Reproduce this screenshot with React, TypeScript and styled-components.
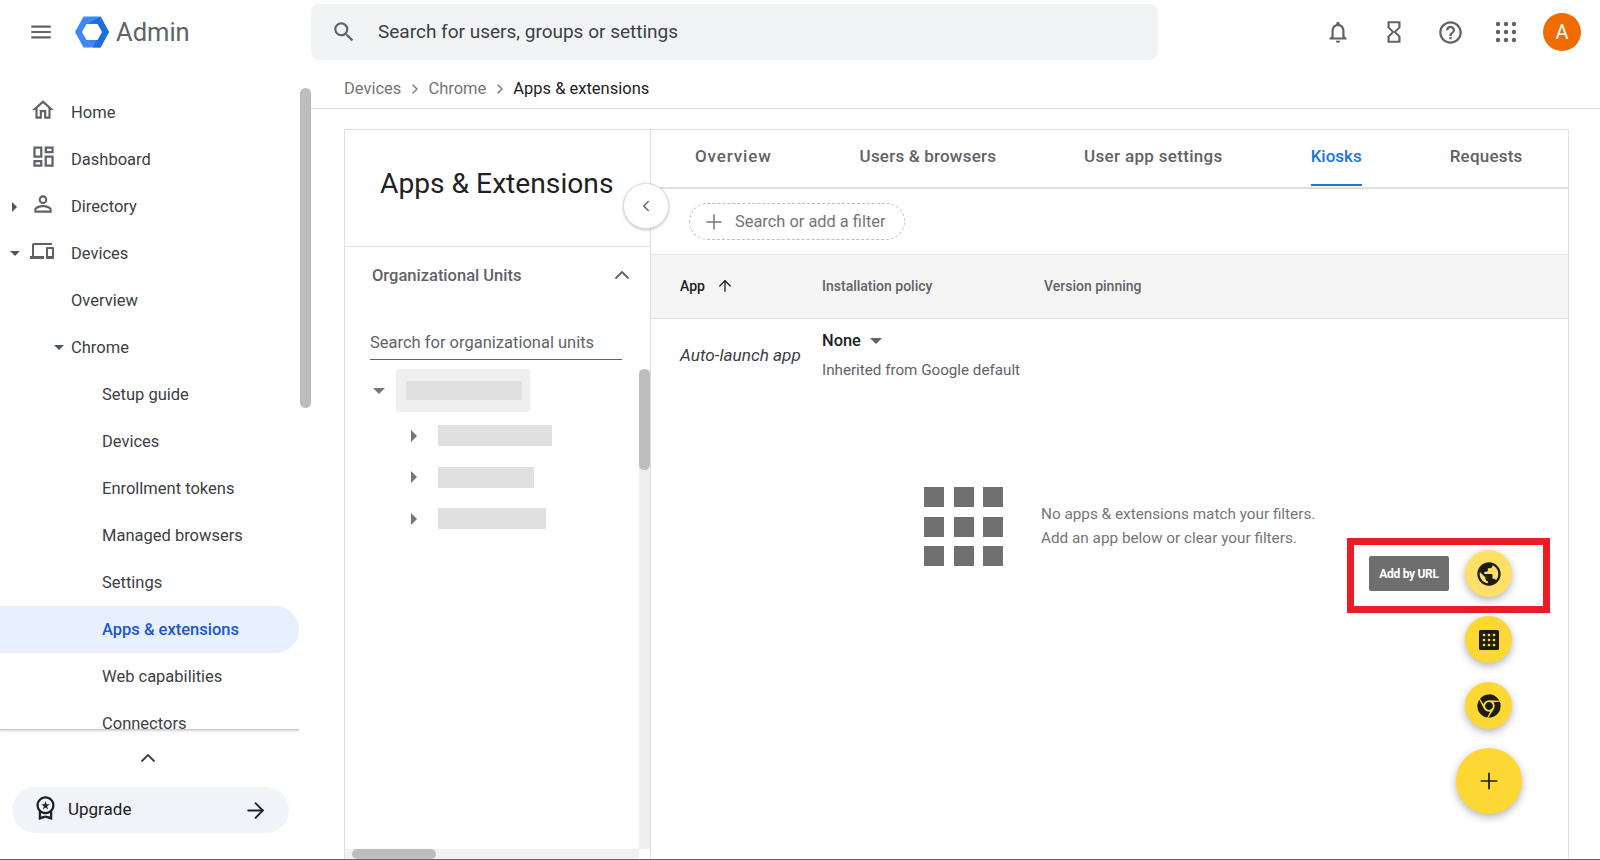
import React from "react";
import styled, { createGlobalStyle } from "styled-components";
import { ArrowRight, ArrowUp, ChevronLeft, ChevronUp, ChevronRight, Plus } from "lucide-react";
import { FaChrome } from "react-icons/fa";

const GlobalStyle = createGlobalStyle`
	html, body {
		margin: 0;
		padding: 0;
		background: #fff;
		overflow: hidden;
	}
	body {
		font-family: Roboto, "Liberation Sans", sans-serif;
		color: #3c4043;
	}
	* {
		box-sizing: border-box;
	}
`;

const Page = styled.div`
	position: relative;
	width: 1600px;
	height: 860px;
	display: flex;
	flex-direction: column;
	border-bottom: 1px solid #666;
	overflow: hidden;
`;

const TopBar = styled.header`
	display: flex;
	align-items: center;
	height: 64px;
	flex: none;
`;

const Brand = styled.div`
	width: 311px;
	display: flex;
	align-items: center;
	padding-left: 28px;
`;

const LogoMark = styled.svg`
	margin-left: 20px;
	flex: none;
`;

const BrandName = styled.span`
	font-size: 25.5px;
	color: #5f6368;
	margin-left: 6px;
`;

const SearchBox = styled.div`
	width: 847px;
	height: 56px;
	background: #f1f3f4;
	border-radius: 8px;
	display: flex;
	align-items: center;
	padding: 0 0 1px 20px;
	gap: 21px;
	font-size: 19px;
	color: #3c4043;
`;

const TopActions = styled.div`
	flex: 1;
	display: flex;
	align-items: center;
	justify-content: flex-end;
	padding-right: 19px;
	gap: 30px;
`;

const Avatar = styled.div`
	width: 38px;
	height: 38px;
	border-radius: 50%;
	background: #ef6c00;
	color: #fff;
	font-size: 20px;
	display: flex;
	align-items: center;
	justify-content: center;
	margin-left: -5px;
`;

const Glyph = styled.svg<{ $size?: number; $color?: string }>`
	width: ${(p) => p.$size ?? 24}px;
	height: ${(p) => p.$size ?? 24}px;
	fill: ${(p) => p.$color ?? "#5f6368"};
	flex: none;
	display: block;
`;

const Body = styled.div`
	flex: 1;
	display: flex;
	min-height: 0;
`;

const Sidebar = styled.aside`
	width: 311px;
	flex: none;
	display: flex;
	flex-direction: column;
`;

const NavArea = styled.div`
	height: 665px;
	display: flex;
	flex: none;
`;

const NavList = styled.nav`
	width: 299px;
	flex: none;
	padding-top: 25px;
	overflow: hidden;
	height: 665px;
`;

const NavScrollThumb = styled.div`
	width: 11px;
	height: 320px;
	margin: 24px 0 0 1px;
	border-radius: 6px;
	background: #bdbdbd;
`;

const NavDivider = styled.div`
	width: 299px;
	height: 1px;
	flex: none;
	background: #c8c8c8;
	box-shadow: 0 1px 2px rgba(0, 0, 0, 0.25);
`;

const NavRow = styled.div<{ $indent: number; $active?: boolean }>`
	height: 47px;
	display: flex;
	align-items: center;
	padding-left: ${(p) => p.$indent}px;
	font-size: 16.5px;
	color: ${(p) => (p.$active ? "#1a56d6" : "#3c4043")};
	background: ${(p) => (p.$active ? "#e8f0fe" : "transparent")};
	border-radius: 0 24px 24px 0;
	font-weight: ${(p) => (p.$active ? 500 : 400)};
`;

const CaretSlot = styled.span`
	width: 25px;
	flex: none;
	display: flex;
	justify-content: center;
`;

const IconSlot = styled.span`
	width: 44px;
	flex: none;
	display: flex;
	padding-left: 3px;
	margin-top: -6px;
`;

const Caret = styled.span<{ $dir: "right" | "down"; $color?: string; $size?: number }>`
	display: block;
	width: 0;
	height: 0;
	${(p) => {
		const s = p.$size ?? 5;
		const c = p.$color ?? "#455a64";
		return p.$dir === "right"
			? `border-top: ${s}px solid transparent; border-bottom: ${s}px solid transparent; border-left: ${s}px solid ${c};`
			: `border-left: ${s}px solid transparent; border-right: ${s}px solid transparent; border-top: ${s}px solid ${c};`;
	}}
`;

const SideFooter = styled.div`
	flex: 1;
	display: flex;
	flex-direction: column;
	padding-top: 16px;
`;

const CollapseRow = styled.div`
	width: 296px;
	display: flex;
	justify-content: center;
	color: #3c4043;
`;

const UpgradePill = styled.div`
	width: 277px;
	height: 46px;
	margin: 17px 0 0 12px;
	background: #f1f4f9;
	border-radius: 23px;
	display: flex;
	align-items: center;
	padding: 0 21px 0 20px;
	font-size: 17px;
	color: #202124;
`;

const UpgradeBadge = styled(Glyph)`
	margin-top: -5px;
`;

const UpgradeLabel = styled.span`
	flex: 1;
	margin: -2px 0 0 9px;
`;

const Main = styled.main`
	flex: 1;
	min-width: 0;
	display: flex;
	flex-direction: column;
`;

const Crumbs = styled.div`
	height: 45px;
	flex: none;
	border-bottom: 1px solid #e0e0e0;
	display: flex;
	align-items: center;
	padding: 5px 0 0 33px;
	font-size: 16.5px;
	color: #757575;
`;

const CrumbCurrent = styled.span`
	color: #202124;
`;

const CrumbSep = styled.span`
	margin: 0 5px 0 6px;
	display: flex;
	color: #757575;
`;

const Content = styled.div`
	flex: 1;
	min-height: 0;
	padding: 20px 31px 0 33px;
	display: flex;
`;

const Frame = styled.div`
	position: relative;
	flex: 1;
	display: flex;
	border: 1px solid #e0e0e0;
	border-bottom: none;
`;

const LeftPanel = styled.section`
	position: relative;
	width: 306px;
	flex: none;
	border-right: 1px solid #e0e0e0;
	display: flex;
	flex-direction: column;
`;

const TitleBlock = styled.div`
	height: 117px;
	flex: none;
	border-bottom: 1px solid #e0e0e0;
	padding: 36px 0 0 35px;
	font-size: 28.2px;
	line-height: 36px;
	color: #202124;
`;

const ToggleButton = styled.div`
	position: absolute;
	left: 278px;
	top: 53px;
	width: 46px;
	height: 46px;
	border-radius: 50%;
	background: #fff;
	border: 1px solid #dadce0;
	box-shadow: 0 1px 3px rgba(0, 0, 0, 0.25);
	display: flex;
	align-items: center;
	justify-content: center;
	color: #5f6368;
	z-index: 2;
`;

const OrgHead = styled.div`
	display: flex;
	align-items: center;
	justify-content: space-between;
	height: 56px;
	padding: 0 16px 0 27px;
	font-size: 16.5px;
	font-weight: 500;
	color: #5f6368;
`;

const OrgSearch = styled.div`
	margin: 23px 0 0 25px;
	width: 252px;
	height: 34px;
	font-size: 16.5px;
	line-height: 34px;
	color: #5f6368;
	border-bottom: 1px solid #5f6368;
`;

const TreeArea = styled.div`
	flex: 1;
	min-height: 0;
	display: flex;
	justify-content: space-between;
	padding-top: 9px;
`;

const Tree = styled.div`
	display: flex;
	flex-direction: column;
	padding-left: 28px;
`;

const TreeRoot = styled.div`
	display: flex;
	align-items: center;
	margin-bottom: 13px;
`;

const TreeChild = styled.div`
	display: flex;
	align-items: center;
	height: 21px;
	margin: 0 0 20.5px 38px;
`;

const RootChip = styled.div`
	width: 134px;
	height: 43px;
	margin-left: 11px;
	background: #eeeeee;
	border-radius: 4px;
	display: flex;
	align-items: center;
	padding-left: 10px;
`;

const Redacted = styled.div<{ $w: number; $h: number; $ml?: number }>`
	width: ${(p) => p.$w}px;
	height: ${(p) => p.$h}px;
	background: #e0e0e0;
	margin-left: ${(p) => p.$ml ?? 0}px;
`;

const TreeTrack = styled.div`
	width: 11px;
	flex: none;
	margin-top: 0;
	background: #eeeeee;
`;

const TreeThumb = styled.div`
	height: 101px;
	background: #bdbdbd;
	border-radius: 6px;
`;

const HorizontalTrack = styled.div`
	height: 10px;
	flex: none;
	background: #f1f1f1;
	padding-left: 7px;
	width: 294px;
`;

const HorizontalThumb = styled.div`
	width: 84px;
	height: 10px;
	background: #bdbdbd;
	border-radius: 5px;
`;

const RightPanel = styled.section`
	flex: 1;
	min-width: 0;
	display: flex;
	flex-direction: column;
`;

const TabBar = styled.div`
	height: 59px;
	flex: none;
	display: flex;
	border-bottom: 2px solid #e0e0e0;
`;

const Tab = styled.div<{ $active?: boolean; $spacing: number }>`
	padding: 0 44px;
	display: flex;
	font-size: 17px;
	font-weight: 500;
	letter-spacing: ${(p) => p.$spacing}px;
	color: ${(p) => (p.$active ? "#1a73e8" : "#5f6368")};
`;

const TabLabel = styled.span<{ $active?: boolean }>`
	display: flex;
	align-items: center;
	height: 56px;
	padding-bottom: 3px;
	border-bottom: 2px solid ${(p) => (p.$active ? "#1a73e8" : "transparent")};
`;

const FilterRow = styled.div`
	height: 66px;
	flex: none;
	display: flex;
	align-items: center;
	padding-left: 38px;
	border-bottom: 1px solid #e0e0e0;
`;

const FilterPill = styled.div`
	width: 216px;
	height: 37px;
	border: 1px dashed #bdbdbd;
	border-radius: 19px;
	display: flex;
	align-items: center;
	padding-left: 12px;
	gap: 9px;
	font-size: 16.4px;
	color: #757575;
`;

const TableHead = styled.div`
	height: 64px;
	flex: none;
	display: flex;
	align-items: center;
	padding-bottom: 2px;
	background: #f5f5f5;
	border-bottom: 1px solid #e0e0e0;
	font-size: 14px;
	font-weight: 500;
	color: #5f6368;
`;

const AppColumn = styled.div`
	width: 171px;
	flex: none;
	padding-left: 29px;
	display: flex;
	align-items: center;
	gap: 11px;
	color: #202124;
`;

const PolicyColumn = styled.div`
	width: 222px;
	flex: none;
`;

const TableRow = styled.div`
	display: flex;
	align-items: center;
	height: 72px;
	flex: none;
`;

const AppName = styled.div`
	width: 171px;
	flex: none;
	padding-left: 29px;
	font-size: 17.2px;
	font-style: italic;
	color: #3c4043;
`;

const PolicyCell = styled.div`
	display: flex;
	flex-direction: column;
	gap: 11px;
`;

const PolicyValue = styled.div`
	display: flex;
	align-items: center;
	gap: 9px;
	font-size: 16.4px;
	font-weight: 500;
	color: #202124;
`;

const PolicyNote = styled.div`
	font-size: 15.2px;
	color: #5f6368;
`;

const EmptyState = styled.div`
	display: flex;
	align-items: center;
	padding: 96px 0 0 273px;
	gap: 38px;
`;

const EmptyGrid = styled.div`
	display: grid;
	grid-template-columns: repeat(3, 20px);
	grid-auto-rows: 20px;
	gap: 9.5px;
`;

const EmptyCell = styled.span`
	background: #6f6f6f;
`;

const EmptyText = styled.div`
	font-size: 15.3px;
	line-height: 23.5px;
	color: #757575;
`;

const FabStack = styled.div`
	position: absolute;
	right: 46px;
	top: 420px;
	display: flex;
	flex-direction: column;
	align-items: flex-end;
	gap: 19px;
`;

const HighlightBox = styled.div`
	position: absolute;
	left: 1002px;
	top: 408px;
	width: 203px;
	height: 75px;
	border: 7px solid #ed1c24;
`;

const MiniRow = styled.div`
	display: flex;
	align-items: center;
	justify-content: flex-end;
	gap: 16px;
	padding-right: 10px;
`;

const UrlTip = styled.div`
	width: 80px;
	height: 35px;
	background: #6e6e6e;
	border-radius: 2px;
	color: #fff;
	font-size: 12px;
	font-weight: 700;
	letter-spacing: -0.3px;
	display: flex;
	align-items: center;
	justify-content: center;
`;

const Fab = styled.div<{ $size: number; $tint: string }>`
	width: ${(p) => p.$size}px;
	height: ${(p) => p.$size}px;
	border-radius: 50%;
	background: ${(p) => p.$tint};
	box-shadow: 0 3px 8px rgba(0, 0, 0, 0.3);
	display: flex;
	align-items: center;
	justify-content: center;
	color: #1d1b0e;
`;

const navTop = [
	{
		label: "Home",
		size: 26,
		d: "M12 5.69l5 4.5V18h-2v-6H9v6H7v-7.81l5-4.5M12 3L2 12h3v8h6v-6h2v6h6v-8h3L12 3z",
	},
	{
		label: "Dashboard",
		size: 27,
		d: "M19 5v2h-4V5h4M9 5v6H5V5h4m10 8v6h-4v-6h4M9 17v2H5v-2h4M21 3h-8v6h8V3zM11 3H3v10h8V3zm10 8h-8v10h8V11zm-10 4H3v6h8v-6z",
	},
	{
		label: "Directory",
		size: 26,
		caret: "right" as const,
		d: "M12 5.9a2.1 2.1 0 110 4.2 2.1 2.1 0 010-4.2m0 9c2.97 0 6.1 1.46 6.1 2.1v1.1H5.9V17c0-.64 3.13-2.1 6.1-2.1M12 4C9.79 4 8 5.79 8 8s1.79 4 4 4 4-1.79 4-4-1.79-4-4-4zm0 9c-2.67 0-8 1.34-8 4v3h16v-3c0-2.66-5.33-4-8-4z",
	},
	{
		label: "Devices",
		size: 24,
		caret: "down" as const,
		d: "M4 6h18V4H4c-1.1 0-2 .9-2 2v11H0v3h14v-3H4V6zm19 2h-6c-.55 0-1 .45-1 1v10c0 .55.45 1 1 1h6c.55 0 1-.45 1-1V9c0-.55-.45-1-1-1zm-1 9h-4v-7h4v7z",
	},
];

const chromeItems = [
	"Setup guide",
	"Devices",
	"Enrollment tokens",
	"Managed browsers",
	"Settings",
	"Apps & extensions",
	"Web capabilities",
	"Connectors",
];

const tabs = [
	{ label: "Overview", spacing: 0.85 },
	{ label: "Users & browsers", spacing: 0.2 },
	{ label: "User app settings", spacing: 0.32 },
	{ label: "Kiosks", spacing: 0 },
	{ label: "Requests", spacing: 0.2 },
];

const treeBars = [114, 96, 108];

const AdminLogo = () => (
	<LogoMark width="36" height="32" viewBox="0 0 36 32" aria-hidden="true">
		<path d="M9.5 0.5h17L35 16l-8.5 15.5h-17L1 16z" fill="#4285f4" />
		<path d="M26.5 0.5L35 16l-8.5 15.5H19l7-15.5-5-8.5H14z" fill="#1a6fdc" />
		<path d="M12.5 8h11L28 16l-4.5 8h-11L8 16z" fill="#fff" />
	</LogoMark>
);

const AppsDots = () => (
	<Glyph viewBox="0 0 24 24">
		{[4, 12, 20].map((y) =>
			[4, 12, 20].map((x) => <circle key={`${x}-${y}`} cx={x} cy={y} r="2.2" />)
		)}
	</Glyph>
);

const KioskIcon = () => (
	<Glyph viewBox="0 0 24 24" $color="#1d1b0e">
		<rect x="2" y="2" width="20" height="20" rx="1.5" />
		{[7, 12, 17].map((y) =>
			[7, 12, 17].map((x) => (
				<rect key={`${x}-${y}`} x={x - 1.2} y={y - 1.2} width="2.4" height="2.4" fill="#fdd835" />
			))
		)}
	</Glyph>
);

const App = () => {
	return (
		<Page>
			<GlobalStyle />
			<TopBar>
				<Brand>
					<Glyph viewBox="0 0 24 24" $size={26}>
						<path d="M3 18h18v-2H3v2zm0-5h18v-2H3v2zm0-7v2h18V6H3z" />
					</Glyph>
					<AdminLogo />
					<BrandName>Admin</BrandName>
				</Brand>
				<SearchBox>
					<Glyph viewBox="0 0 24 24" $size={26}>
						<path d="M15.5 14h-.79l-.28-.27A6.471 6.471 0 0016 9.5 6.5 6.5 0 109.5 16c1.61 0 3.09-.59 4.23-1.57l.27.28v.79l5 4.99L20.49 19l-4.99-5zm-6 0C7.01 14 5 11.99 5 9.5S7.01 5 9.5 5 14 7.01 14 9.5 11.99 14 9.5 14z" />
					</Glyph>
					Search for users, groups or settings
				</SearchBox>
				<TopActions>
					<Glyph viewBox="0 0 24 24" $size={26}>
						<path d="M12 22c1.1 0 2-.9 2-2h-4c0 1.1.9 2 2 2zm6-6v-5c0-3.07-1.63-5.64-4.5-6.32V4c0-.83-.67-1.5-1.5-1.5s-1.5.67-1.5 1.5v.68C7.64 5.36 6 7.92 6 11v5l-2 2v1h16v-1l-2-2zm-2 1H8v-6c0-2.48 1.51-4.5 4-4.5s4 2.02 4 4.5v6z" />
					</Glyph>
					<Glyph viewBox="0 0 24 24" $size={26}>
						<path d="M6 2v6h.01L6 8.01 10 12l-4 4 .01.01H6V22h12v-5.99h-.01L18 16l-4-4 4-3.99-.01-.01H18V2H6zm10 14.5V20H8v-3.5l4-4 4 4zm-4-5l-4-4V4h8v3.5l-4 4z" />
					</Glyph>
					<Glyph viewBox="0 0 24 24" $size={27}>
						<path d="M11 18h2v-2h-2v2zm1-16C6.48 2 2 6.48 2 12s4.48 10 10 10 10-4.48 10-10S17.52 2 12 2zm0 18c-4.41 0-8-3.59-8-8s3.59-8 8-8 8 3.59 8 8-3.59 8-8 8zm0-14c-2.21 0-4 1.79-4 4h2c0-1.1.9-2 2-2s2 .9 2 2c0 2-3 1.75-3 5h2c0-2.25 3-2.5 3-5 0-2.21-1.79-4-4-4z" />
					</Glyph>
					<AppsDots />
					<Avatar>A</Avatar>
				</TopActions>
			</TopBar>
			<Body>
				<Sidebar>
					<NavArea>
						<NavList>
							{navTop.map((item) => (
								<NavRow key={item.label} $indent={2}>
									<CaretSlot>{item.caret && <Caret $dir={item.caret} />}</CaretSlot>
									<IconSlot>
										<Glyph viewBox="0 0 24 24" $size={item.size}>
											<path d={item.d} />
										</Glyph>
									</IconSlot>
									{item.label}
								</NavRow>
							))}
							<NavRow $indent={71}>Overview</NavRow>
							<NavRow $indent={46}>
								<CaretSlot>
									<Caret $dir="down" />
								</CaretSlot>
								Chrome
							</NavRow>
							{chromeItems.map((label) => (
								<NavRow key={label} $indent={102} $active={label === "Apps & extensions"}>
									{label}
								</NavRow>
							))}
						</NavList>
						<NavScrollThumb />
					</NavArea>
					<NavDivider />
					<SideFooter>
						<CollapseRow>
							<ChevronUp size={24} strokeWidth={1.8} />
						</CollapseRow>
						<UpgradePill>
							<UpgradeBadge viewBox="0 0 24 24" $size={27} $color="#202124">
								<path d="M9.68 13.69L12 11.93l2.31 1.76-.88-2.85L15.75 9h-2.84L12 6.19 11.09 9H8.25l2.31 1.84-.88 2.85zM20 10c0-4.42-3.58-8-8-8s-8 3.58-8 8c0 2.03.76 3.87 2 5.28V23l6-2 6 2v-7.72c1.24-1.41 2-3.25 2-5.28zm-8-6c3.31 0 6 2.69 6 6s-2.69 6-6 6-6-2.69-6-6 2.69-6 6-6zm0 15l-4 1.02v-3.1c1.18.68 2.54 1.08 4 1.08s2.82-.4 4-1.08v3.1L12 19z" />
							</UpgradeBadge>
							<UpgradeLabel>Upgrade</UpgradeLabel>
							<ArrowRight size={25} strokeWidth={1.8} />
						</UpgradePill>
					</SideFooter>
				</Sidebar>
				<Main>
					<Crumbs>
						Devices
						<CrumbSep>
							<ChevronRight size={16} />
						</CrumbSep>
						Chrome
						<CrumbSep>
							<ChevronRight size={16} />
						</CrumbSep>
						<CrumbCurrent>Apps &amp; extensions</CrumbCurrent>
					</Crumbs>
					<Content>
						<Frame>
							<LeftPanel>
								<TitleBlock>Apps &amp; Extensions</TitleBlock>
								<ToggleButton>
									<ChevronLeft size={18} strokeWidth={2} />
								</ToggleButton>
								<OrgHead>
									Organizational Units
									<ChevronUp size={24} strokeWidth={1.8} />
								</OrgHead>
								<OrgSearch>Search for organizational units</OrgSearch>
								<TreeArea>
									<Tree>
										<TreeRoot>
											<Caret $dir="down" $color="#757575" $size={6} />
											<RootChip>
												<Redacted $w={116} $h={19} />
											</RootChip>
										</TreeRoot>
										{treeBars.map((w) => (
											<TreeChild key={w}>
												<Caret $dir="right" $color="#757575" $size={6} />
												<Redacted $w={w} $h={21} $ml={21} />
											</TreeChild>
										))}
									</Tree>
									<TreeTrack>
										<TreeThumb />
									</TreeTrack>
								</TreeArea>
								<HorizontalTrack>
									<HorizontalThumb />
								</HorizontalTrack>
							</LeftPanel>
							<RightPanel>
								<TabBar>
									{tabs.map((t) => (
										<Tab key={t.label} $active={t.label === "Kiosks"} $spacing={t.spacing}>
											<TabLabel $active={t.label === "Kiosks"}>{t.label}</TabLabel>
										</Tab>
									))}
								</TabBar>
								<FilterRow>
									<FilterPill>
										<Plus size={24} strokeWidth={1.5} />
										Search or add a filter
									</FilterPill>
								</FilterRow>
								<TableHead>
									<AppColumn>
										App
										<ArrowUp size={18} strokeWidth={1.8} />
									</AppColumn>
									<PolicyColumn>Installation policy</PolicyColumn>
									<span>Version pinning</span>
								</TableHead>
								<TableRow>
									<AppName>Auto-launch app</AppName>
									<PolicyCell>
										<PolicyValue>
											None
											<Caret $dir="down" $color="#5f6368" $size={6} />
										</PolicyValue>
										<PolicyNote>Inherited from Google default</PolicyNote>
									</PolicyCell>
								</TableRow>
								<EmptyState>
									<EmptyGrid>
										{Array.from({ length: 9 }, (_, i) => (
											<EmptyCell key={i} />
										))}
									</EmptyGrid>
									<EmptyText>
										No apps &amp; extensions match your filters.
										<br />
										Add an app below or clear your filters.
									</EmptyText>
								</EmptyState>
							</RightPanel>
							<HighlightBox />
							<FabStack>
								<MiniRow>
									<UrlTip>Add by URL</UrlTip>
									<Fab $size={47} $tint="#ffe066">
										<Glyph viewBox="0 0 24 24" $size={28} $color="#1d1b0e">
											<path d="M12 2C6.48 2 2 6.48 2 12s4.48 10 10 10 10-4.48 10-10S17.52 2 12 2zm-1 17.93c-3.95-.49-7-3.85-7-7.93 0-.62.08-1.21.21-1.79L9 15v1c0 1.1.9 2 2 2v1.93zm6.9-2.54c-.26-.81-1-1.39-1.9-1.39h-1v-3c0-.55-.45-1-1-1H8v-2h2c.55 0 1-.45 1-1V7h2c1.1 0 2-.9 2-2v-.41c2.93 1.19 5 4.06 5 7.41 0 2.08-.8 3.97-2.1 5.39z" />
										</Glyph>
									</Fab>
								</MiniRow>
								<MiniRow>
									<Fab $size={47} $tint="#fdd835">
										<KioskIcon />
									</Fab>
								</MiniRow>
								<MiniRow>
									<Fab $size={47} $tint="#fdd835">
										<FaChrome size={24} />
									</Fab>
								</MiniRow>
								<Fab $size={66} $tint="#fdd835">
									<Plus size={26} strokeWidth={1.6} />
								</Fab>
							</FabStack>
						</Frame>
					</Content>
				</Main>
			</Body>
		</Page>
	);
};

export default App;
